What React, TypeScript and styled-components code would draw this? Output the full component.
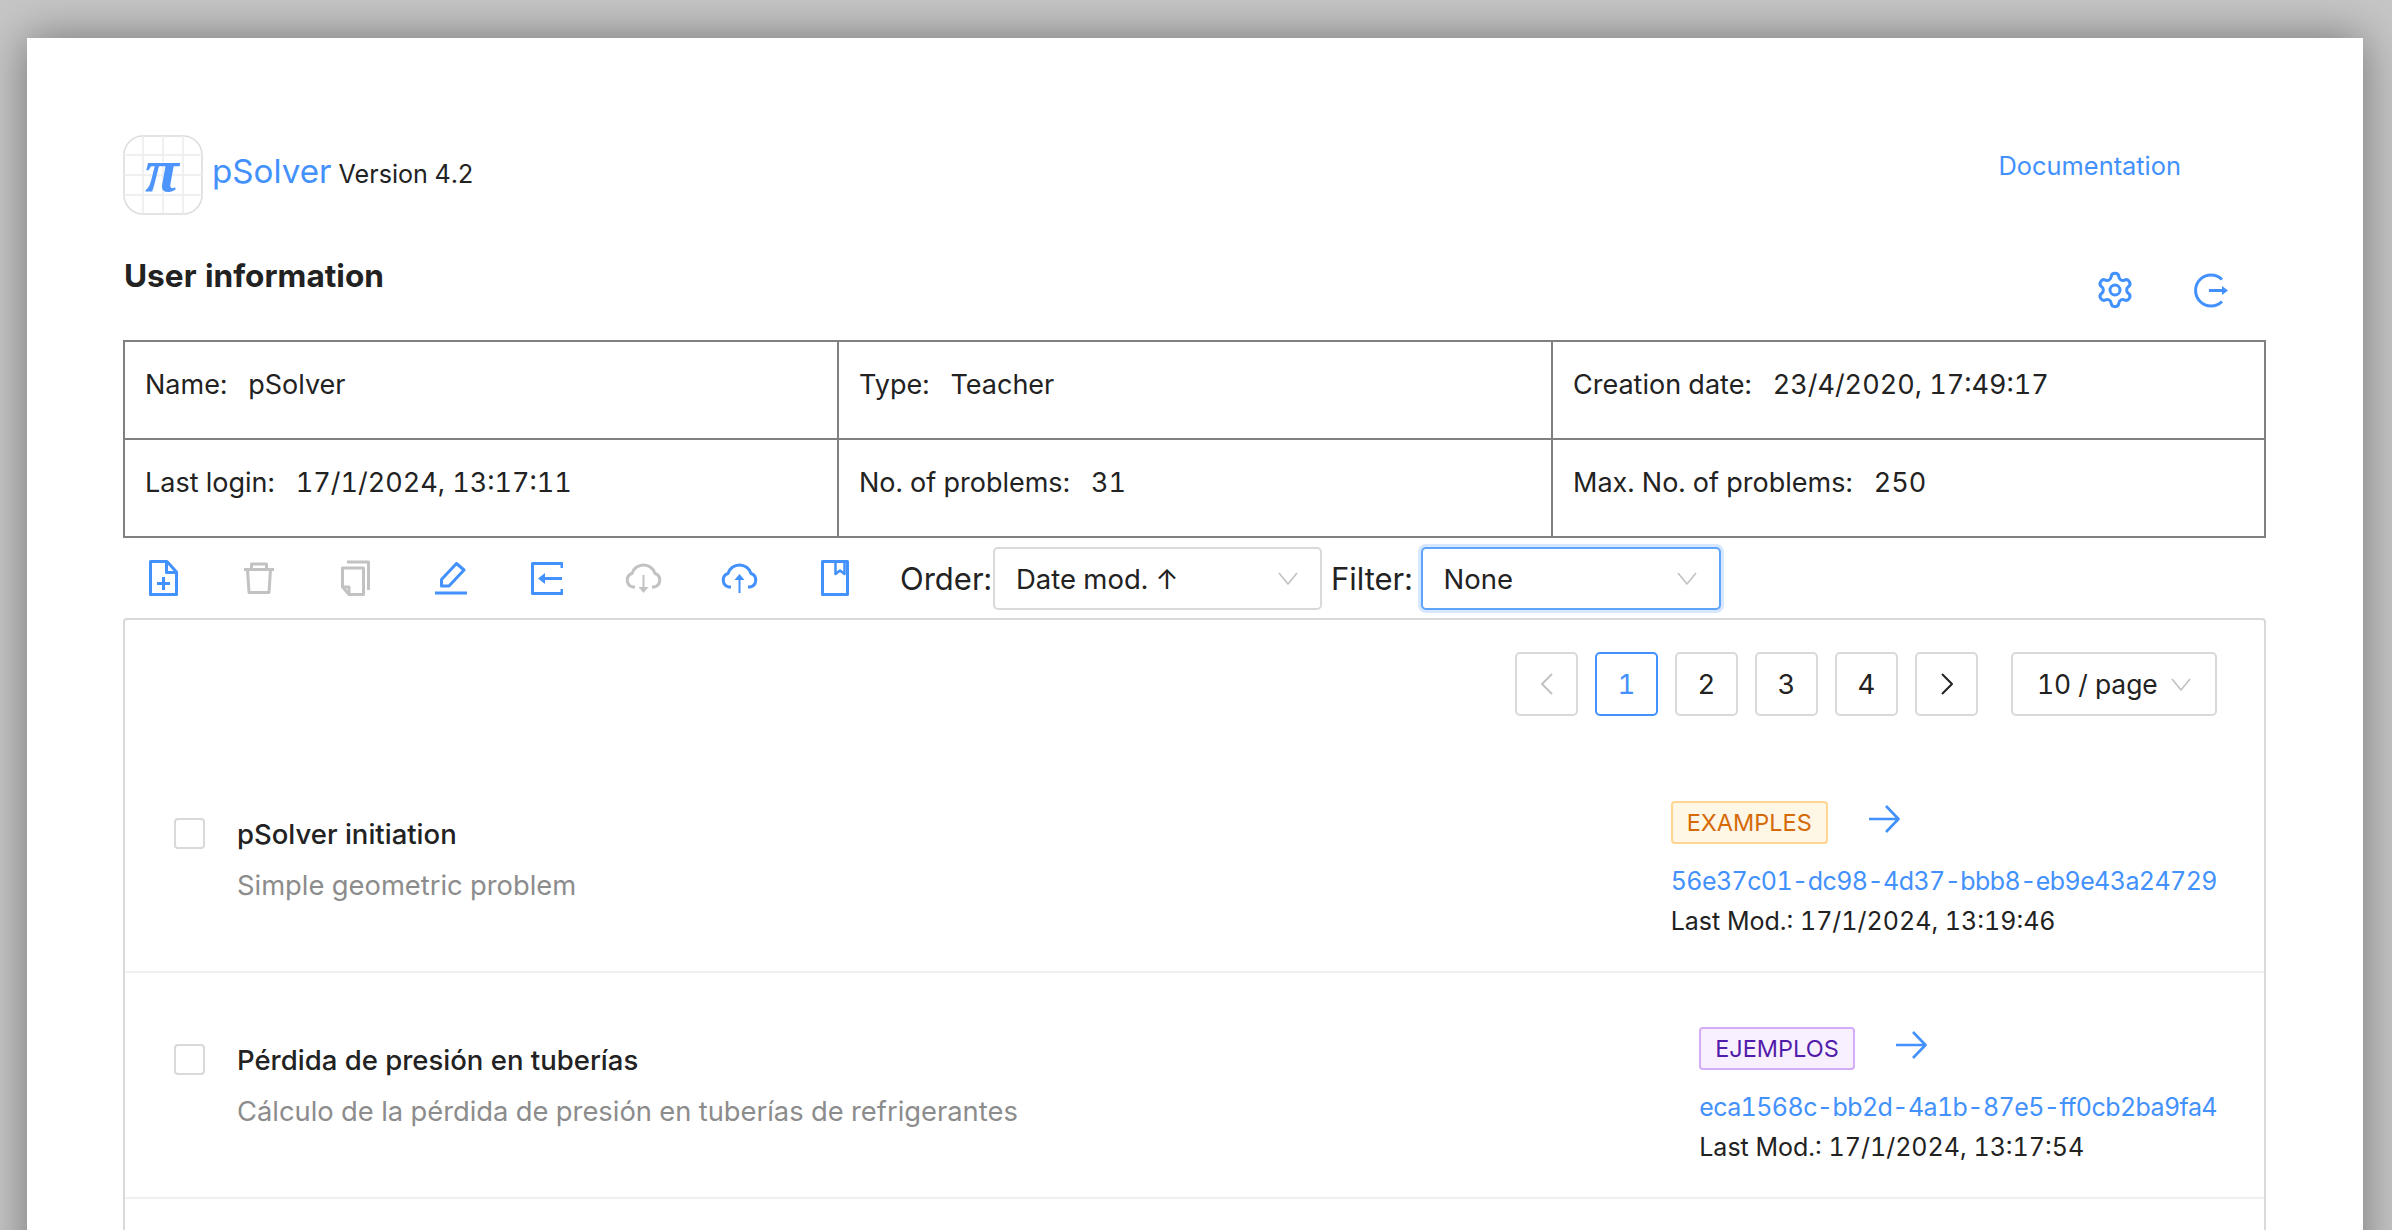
import React from "react";
import styled, { createGlobalStyle } from "styled-components";
import { Settings } from "lucide-react";

const BLUE = "#4391fc";

const GlobalStyle = createGlobalStyle`
  html, body {
    margin: 0;
    height: 100%;
    overflow: hidden;
    background: #c6c6c6;
    font-family: Inter, "Liberation Sans", sans-serif;
    font-feature-settings: "tnum";
    font-variant-numeric: tabular-nums;
    color: #222;
  }
`;

const Panel = styled.div`
  margin: 38px 29px 0 27px;
  height: 1300px;
  padding: 97px 97px 0 96px;
  background: #fff;
  box-shadow: 0 0 44px rgba(0, 0, 0, 0.42);
  box-sizing: border-box;
`;

const Header = styled.div`
  display: flex;
  align-items: flex-start;
  justify-content: space-between;
  height: 78px;
`;

const Brand = styled.div`
  display: flex;
  align-items: flex-start;
`;

const Logo = styled.svg`
  width: 80px;
  height: 80px;
  margin-right: 9px;
  flex: none;
`;

const BrandText = styled.div`
  margin-top: 16px;
  white-space: nowrap;
`;

const AppName = styled.span`
  font-size: 33.2px;
  color: ${BLUE};
  margin-right: 7px;
`;

const Version = styled.span`
  font-size: 25.1px;
`;

const DocLink = styled.a`
  font-size: 25.4px;
  color: ${BLUE};
  margin: 15px 85px 0 0;
`;

const UserHead = styled.div`
  display: flex;
  justify-content: space-between;
  align-items: flex-start;
  height: 127px;
`;

const SectionTitle = styled.h2`
  margin: 43px 0 0 1px;
  font-size: 31.6px;
  line-height: 40px;
  font-weight: 700;
`;

const UserActions = styled.div`
  display: flex;
  align-items: center;
  gap: 58px;
  margin: 57px 38px 0 0;
`;

const InfoTable = styled.div`
  display: grid;
  grid-template-columns: 714px 714px 1fr;
  border-top: 2px solid #808080;
  border-left: 2px solid #808080;
  box-sizing: border-box;
  height: 198px;
`;

const InfoCell = styled.div`
  display: flex;
  align-items: center;
  padding: 0 0 12px 20px;
  font-size: 27px;
  border-right: 2px solid #808080;
  border-bottom: 2px solid #808080;
`;

const InfoLabel = styled.span`
  margin-right: 21px;
`;

const Toolbar = styled.div`
  display: flex;
  align-items: center;
  height: 80px;
  margin-left: -8px;
`;

const IconSlot = styled.div`
  width: 96px;
  display: flex;
  justify-content: center;
  flex: none;
`;

const Icon = styled.svg<{ $off?: boolean }>`
  display: block;
  fill: none;
  stroke: ${(p) => (p.$off ? "#c2c2c2" : BLUE)};
  stroke-width: 3;
  stroke-linejoin: round;
  color: ${(p) => (p.$off ? "#c2c2c2" : BLUE)};
`;

const ToolLabel = styled.span<{ $after?: boolean }>`
  font-size: 31px;
  margin: ${(p) => (p.$after ? "0 8px 0 9px" : "0 1px 0 17px")};
`;

const Select = styled.div<{ $focused?: boolean; $width: number }>`
  display: flex;
  align-items: center;
  justify-content: space-between;
  width: ${(p) => p.$width}px;
  height: 63px;
  box-sizing: border-box;
  padding: 1px 22px 0 21px;
  font-size: 27.5px;
  background: #fff;
  border: 2px solid ${(p) => (p.$focused ? "#5ea4fb" : "#d9d9d9")};
  border-radius: 5px;
  box-shadow: ${(p) => (p.$focused ? "0 0 0 3px #d6e7ff" : "none")};
`;

const Card = styled.div`
  height: 800px;
  border: 2px solid #d9d9d9;
  border-radius: 4px;
  box-sizing: border-box;
`;

const Pager = styled.div`
  display: flex;
  justify-content: flex-end;
  align-items: center;
  gap: 17px;
  padding: 32px 47px 31px 0;
`;

const PageButton = styled.div<{ $active?: boolean }>`
  display: flex;
  align-items: center;
  justify-content: center;
  width: 63px;
  height: 64px;
  box-sizing: border-box;
  font-size: 27.5px;
  color: ${(p) => (p.$active ? BLUE : "#222")};
  border: 2px solid ${(p) => (p.$active ? BLUE : "#d9d9d9")};
  border-radius: 5px;
`;

const PageSize = styled(Select)`
  height: 64px;
  margin-left: 16px;
  padding: 0 24px 0 24px;
  font-size: 26.4px;
`;

const Row = styled.div`
  display: flex;
  justify-content: space-between;
  height: 226px;
  box-sizing: border-box;
  padding: 54px 47px 0 49px;
  border-bottom: 2px solid #f0f0f0;
`;

const RowMain = styled.div`
  display: flex;
  align-items: flex-start;
  padding-top: 17px;
`;

const Check = styled.div`
  width: 31px;
  height: 31px;
  box-sizing: border-box;
  border: 2px solid #d9d9d9;
  border-radius: 4px;
  margin-right: 32px;
`;

const ProblemTitle = styled.div`
  font-size: 27.5px;
  font-weight: 500;
  line-height: 32px;
`;

const ProblemText = styled.div`
  margin-top: 20px;
  font-size: 27.35px;
  line-height: 32px;
  color: #8c8c8c;
`;

const RowMeta = styled.div`
  display: flex;
  flex-direction: column;
  align-items: flex-start;
`;

const TagLine = styled.div`
  display: flex;
  align-items: center;
  gap: 41px;
  height: 43px;
`;

const tagColors = {
  orange: { bg: "#fff7e6", line: "#ffd591", text: "#d46b08" },
  purple: { bg: "#f9f0ff", line: "#d3adf7", text: "#531dab" },
};

const Tag = styled.span<{ $tone: keyof typeof tagColors }>`
  display: flex;
  align-items: center;
  height: 43px;
  box-sizing: border-box;
  padding: 0 14px;
  font-size: 23.5px;
  border-radius: 4px;
  background: ${(p) => tagColors[p.$tone].bg};
  border: 2px solid ${(p) => tagColors[p.$tone].line};
  color: ${(p) => tagColors[p.$tone].text};
`;

const ArrowIcon = styled(Icon)`
  stroke-width: 2.6;
  margin-bottom: 8px;
`;

const Uuid = styled.a`
  margin-top: 21px;
  font-size: 25px;
  letter-spacing: -0.58px;
  line-height: 32px;
  color: ${BLUE};
`;

const Modified = styled.div`
  margin-top: 8px;
  font-size: 25px;
  line-height: 32px;
`;

const PiLogo = () => (
  <Logo viewBox="0 0 80 80">
    <rect x="1" y="1" width="78" height="78" rx="19" fill="#fff" stroke="#dcdcdc" strokeWidth="1.5" />
    <path d="M20 1V79M40 1V79M60 1V79M1 20H79M1 40H79M1 60H79" stroke="#ececec" strokeWidth="1.5" />
    <text x="39" y="56" textAnchor="middle" fontFamily="'Liberation Serif', serif" fontStyle="italic" fontWeight="700" fontSize="62" fill="#4d94fd">π</text>
  </Logo>
);

const Chevron = ({ size = 20 }: { size?: number }) => (
  <Icon $off width={size} height={size * 0.65} viewBox="0 0 20 13" style={{ strokeWidth: 1.6 }}>
    <path d="M1 1L10 12L19 1" />
  </Icon>
);

const Caret = ({ left, off }: { left?: boolean; off?: boolean }) => (
  <Icon $off={off} width="14" height="22" viewBox="0 0 14 22" style={{ strokeWidth: 2, stroke: off ? "#c2c2c2" : "#222" }}>
    <path d={left ? "M12 1L2 11L12 21" : "M2 1L12 11L2 21"} />
  </Icon>
);

const ArrowRight = () => (
  <ArrowIcon width="31" height="28" viewBox="0 0 31 28">
    <path d="M0 14H29M17 1L29.500 14L17 27" />
  </ArrowIcon>
);

const Logout = () => (
  <Icon width="35" height="35" viewBox="0 0 35 35">
    <path d="M29 6.500A15.500 15.500 0 1 0 29 28.500" />
    <path d="M16 17.500H30" />
    <path d="M29 13L35 17.500L29 22Z" fill={BLUE} stroke="none" />
  </Icon>
);

const toolIcons = [
  <Icon width="29" height="36" viewBox="0 0 29 36">
    <path d="M1.500 1.500H18L27.500 12V34.500H1.500Z" />
    <path d="M17.500 1.500V12.500H27.500M14.500 17V30M8 23.500H21" />
  </Icon>,
  <Icon $off width="30" height="32" viewBox="0 0 30 32">
    <path d="M0 7.500H30M7.500 7.500V2H22.500V7.500M3.500 7.500L5 30.500H25L26.500 7.500" />
  </Icon>,
  <Icon $off width="29" height="36" viewBox="0 0 29 36">
    <path d="M6 2H27.500V30" />
    <path d="M1.500 8H22.500V34.500H8L1.500 27ZM1.500 27H8V34.500" />
  </Icon>,
  <Icon width="32" height="33" viewBox="0 0 32 33">
    <path d="M6.500 17.500L21.500 1.500L29 8L14 24H6.500Z" />
    <path d="M0 31H32" />
  </Icon>,
  <Icon width="32" height="33" viewBox="0 0 32 33">
    <path d="M31 6V1.500H1.500V31.500H31V27" />
    <path d="M31 16.500H13" />
    <path d="M7 16.500L14 11V22Z" fill={BLUE} stroke="none" />
  </Icon>,
  <Icon $off width="37" height="30" viewBox="0 0 37 30">
    <path d="M10 24H8A7 7 0 0 1 7 10.500A12 12 0 0 1 30 10.500A7 7 0 0 1 29 24H27" />
    <path d="M18.500 12V26" strokeWidth="2" />
    <path d="M13.500 24H23.500L18.500 30Z" fill="#c2c2c2" stroke="none" />
  </Icon>,
  <Icon width="37" height="30" viewBox="0 0 37 30">
    <path d="M10 24H8A7 7 0 0 1 7 10.500A12 12 0 0 1 30 10.500A7 7 0 0 1 29 24H27" />
    <path d="M18.500 16V30" strokeWidth="2" />
    <path d="M13.500 17H23.500L18.500 11Z" fill={BLUE} stroke="none" />
  </Icon>,
  <Icon width="28" height="36" viewBox="0 0 28 36">
    <path d="M1.500 1.500H26.500V34.500H1.500Z" />
    <path d="M14.500 2V14L19 10.500L23.500 14V2" strokeWidth="2.500" />
  </Icon>,
];

const problems = [
  {
    title: "pSolver initiation",
    text: "Simple geometric problem",
    tag: "EXAMPLES",
    tone: "orange" as const,
    id: "56e37c01-dc98-4d37-bbb8-eb9e43a24729",
    date: "17/1/2024, 13:19:46",
  },
  {
    title: "Pérdida de presión en tuberías",
    text: "Cálculo de la pérdida de presión en tuberías de refrigerantes",
    tag: "EJEMPLOS",
    tone: "purple" as const,
    id: "eca1568c-bb2d-4a1b-87e5-ff0cb2ba9fa4",
    date: "17/1/2024, 13:17:54",
  },
];

const info = [
  ["Name", "pSolver"],
  ["Type", "Teacher"],
  ["Creation date", "23/4/2020, 17:49:17"],
  ["Last login", "17/1/2024, 13:17:11"],
  ["No. of problems", "31"],
  ["Max. No. of problems", "250"],
];

const App: React.FC = () => {
  return (
    <>
      <GlobalStyle />
      <Panel>
        <Header>
          <Brand>
            <PiLogo />
            <BrandText>
              <AppName>pSolver</AppName>
              <Version>Version 4.2</Version>
            </BrandText>
          </Brand>
          <DocLink>Documentation</DocLink>
        </Header>
        <UserHead>
          <SectionTitle>User information</SectionTitle>
          <UserActions>
            <Settings size={40} color={BLUE} strokeWidth={1.8} />
            <Logout />
          </UserActions>
        </UserHead>
        <InfoTable>
          {info.map(([label, value]) => (
            <InfoCell key={label}>
              <InfoLabel>{label}:</InfoLabel>
              {value}
            </InfoCell>
          ))}
        </InfoTable>
        <Toolbar>
          {toolIcons.map((icon, i) => (
            <IconSlot key={i}>{icon}</IconSlot>
          ))}
          <ToolLabel>Order:</ToolLabel>
          <Select $width={329}>
            Date mod. ↑
            <Chevron />
          </Select>
          <ToolLabel $after>Filter:</ToolLabel>
          <Select $width={300} $focused>
            None
            <Chevron />
          </Select>
        </Toolbar>
        <Card>
          <Pager>
            <PageButton>
              <Caret left off />
            </PageButton>
            <PageButton $active>1</PageButton>
            <PageButton>2</PageButton>
            <PageButton>3</PageButton>
            <PageButton>4</PageButton>
            <PageButton>
              <Caret />
            </PageButton>
            <PageSize $width={206}>
              10 / page
              <Chevron />
            </PageSize>
          </Pager>
          {problems.map((p) => (
            <Row key={p.id}>
              <RowMain>
                <Check />
                <div>
                  <ProblemTitle>{p.title}</ProblemTitle>
                  <ProblemText>{p.text}</ProblemText>
                </div>
              </RowMain>
              <RowMeta>
                <TagLine>
                  <Tag $tone={p.tone}>{p.tag}</Tag>
                  <ArrowRight />
                </TagLine>
                <Uuid>{p.id}</Uuid>
                <Modified>Last Mod.: {p.date}</Modified>
              </RowMeta>
            </Row>
          ))}
        </Card>
      </Panel>
    </>
  );
};

export default App;
